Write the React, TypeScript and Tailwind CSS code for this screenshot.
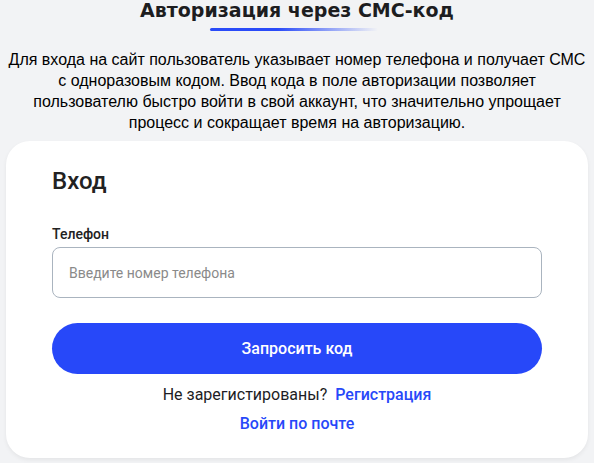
import React from 'react';

const App: React.FC = () => {
  return (
    <div className="h-[463px] overflow-hidden bg-[#f2f3f5]">
      <div className="flex flex-col items-center">
        <h1 className="-mt-[3px] text-[19px] font-bold leading-[26px] text-[#1d1d1f] font-['DejaVu_Sans',sans-serif]">
          Авторизация через СМС-код
        </h1>
        <div className="mt-[5px] ml-[-6px] h-[3px] w-[168px] rounded-full bg-gradient-to-r from-[#2a4bf8] from-40% to-transparent" />
        <p className="mt-[18px] px-[6px] text-center text-[16px] leading-[21px] text-black font-['Liberation_Sans',Arial,sans-serif]">
          Для входа на сайт пользователь указывает номер телефона и получает СМС с одноразовым кодом. Ввод кода в поле авторизации позволяет пользователю быстро войти в свой аккаунт, что значительно упрощает процесс и сокращает время на авторизацию.
        </p>
      </div>
      <div className="mx-[6px] mt-[8px] rounded-[24px] bg-white px-[46px] pt-[26px] pb-[24px] shadow-[0_2px_4px_rgba(0,0,0,0.06)] font-['Roboto',sans-serif]">
        <h2 className="text-[24px] font-medium leading-[28px] text-[#222]">Вход</h2>
        <label className="mt-[31px] block text-[14px] font-medium leading-[16px] text-[#222]">Телефон</label>
        <input
          className="mt-[5px] block h-[51px] w-full rounded-[8px] border border-[#aab4bf] px-[16px] text-[14px] text-[#222] outline-none placeholder:text-[#8a8a8a]"
          placeholder="Введите номер телефона"
        />
        <button className="mt-[25px] flex h-[51px] w-full items-center justify-center rounded-full bg-[#2748f9] text-[16px] font-medium text-white">
          Запросить код
        </button>
        <div className="mt-[11px] flex justify-center gap-[8px] text-[16px] leading-[20px]">
          <span className="text-[#1d1d24]">Не зарегистированы?</span>
          <a href="#" className="font-medium text-[#2748f9]">Регистрация</a>
        </div>
        <div className="mt-[9px] flex justify-center text-[16px] leading-[20px]">
          <a href="#" className="font-medium text-[#2748f9]">Войти по почте</a>
        </div>
      </div>
    </div>
  );
};

export default App;
